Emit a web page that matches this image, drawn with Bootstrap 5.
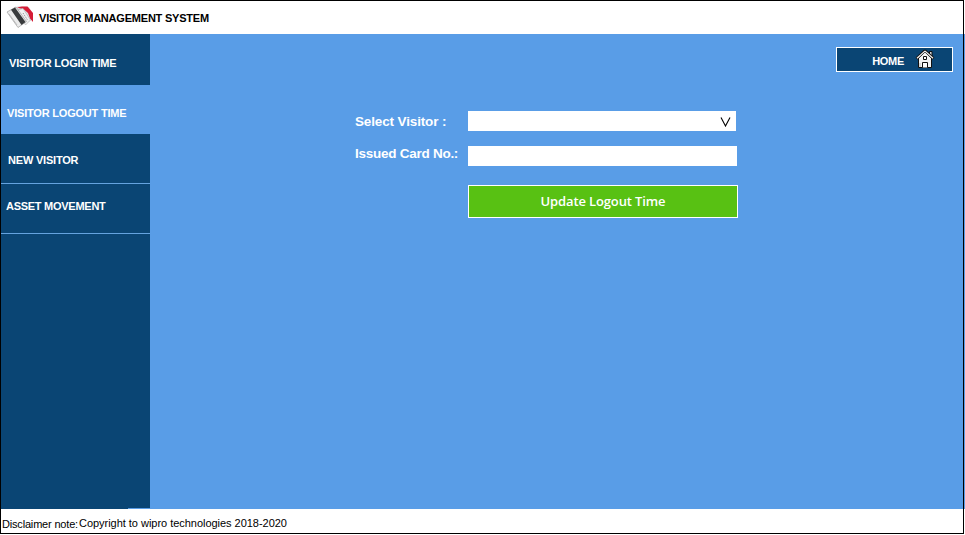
<!DOCTYPE html>
<html lang="en">
<head>
<meta charset="utf-8">
<title>Visitor Management System</title>
<link href="https://cdn.jsdelivr.net/npm/bootstrap@5.3.0/dist/css/bootstrap.min.css" rel="stylesheet">
<style>
:root{--sky:#599de7;--navy:#0a4574}
body{font-family:"Liberation Sans",Arial,sans-serif;font-size:11px;line-height:14px;background:linear-gradient(#fff 34px,var(--sky) 34px 509px,#fff 509px)}
.app-frame{width:964px;height:534px;border:1px solid #000}
.app-header{height:33px;padding-left:5px;background:#fff}
.app-title{letter-spacing:-.21px;margin:1px 0 0 5px;font-size:11px;line-height:14px}
.card-logo{margin-bottom:2px}
.side-menu{width:149px;background:var(--navy)}
.side-menu .nav-link{color:#fff;font-weight:700;letter-spacing:-.2px;font-size:11px;line-height:14px;padding:0;white-space:nowrap}
.side-menu .item-login{height:51px;padding:22px 0 0 8px}
.side-menu .item-logout{height:49px;padding:21px 0 0 6px;background:var(--sky)}
.side-menu .item-new{height:50px;padding:19px 0 0 7px;border-bottom:1px solid #65a3df}
.side-menu .item-asset{height:50px;padding:15px 0 0 5px;border-bottom:1px solid #65a3df;letter-spacing:-.27px}
.menu-edge{width:22px;height:1px;background:var(--sky)}
.work-area{background:var(--sky)}
.home-btn{width:117px;height:25px;margin:13px 10px 0 0;padding:0 17px 0 0;border:1px solid #fff;border-radius:0;background:var(--navy);color:#fff;font-size:11px;font-weight:700;line-height:14px;letter-spacing:-.3px;gap:12px}
.home-btn:hover{background:var(--navy);color:#fff}
.home-text{padding-top:3px;margin-right:-1px}
.home-icon{margin-bottom:2px}
.visitor-form{width:383px;margin:39px 0 0 205px}
.form-line{height:20px}
.form-line label{width:113px;color:#fff;font-weight:700;font-size:13.5px;line-height:16px;white-space:nowrap;letter-spacing:-.14px}
.label-visitor{padding-top:2px}
.form-line .label-card{padding-bottom:4px;letter-spacing:-.26px}
.card-line{margin-top:15px}
.field-box{height:20px;border:0;border-radius:0;background:#fff;padding:0 5px 0 0}
.w-select{width:268px;padding-top:2px}.w-card{width:269px}
.update-btn{width:270px;height:33px;margin:19px 0 0 113px;padding:0;border:1px solid #fff;border-radius:0;background:#58c113;color:#fff;font:600 13px/29px "Open Sans",sans-serif;letter-spacing:-.13px}
.update-btn:hover{background:#58c113;color:#fff}
.app-footer{height:24px;padding:5px 0 0 1px;background:#fff;color:#000;white-space:nowrap}
.note-label{width:77px;padding-top:1px;letter-spacing:-.18px}
.note-copy{padding:0 0 1px 0;letter-spacing:-.03px}
</style>
<script src="https://cdn.jsdelivr.net/npm/bootstrap@5.3.0/dist/js/bootstrap.bundle.min.js"></script>
</head>
<body>
<div class="app-frame d-flex flex-column">
  <header class="app-header d-flex align-items-center">
    <svg class="card-logo" width="28" height="24" viewBox="0 0 28 24" aria-hidden="true">
      <path d="M9 2l5-1 9 1 3 6v7l-6 3z" fill="#dfe0e1"/>
      <path d="M11 2.500l5-1h5.500L27 8v9l-3-3.500-2-5.500-4-3.500z" fill="#d51c36"/>
      <path d="M11 5l6-1.500L24.500 15l-5 5z" fill="#f1f1f1" stroke="#b5b5b5" stroke-width=".7"/>
      <path d="M17 8l4.500 7M15 11l3.500 6" stroke="#999" stroke-width="1" stroke-dasharray="1.5 1"/>
      <path d="M1 7l9-5 10.500 14.500L12 22.500z" fill="#ebebeb" stroke="#a8a8a8" stroke-width=".8"/>
      <path d="M5 4.800l4-2.200L19.500 17l-4 3z" fill="#393b3c"/>
      <path d="M3 9l8 11" stroke="#bbb" stroke-width="1"/>
    </svg>
    <h1 class="app-title fw-bold text-black">VISITOR MANAGEMENT SYSTEM</h1>
  </header>
  <div class="d-flex flex-grow-1">
    <nav class="side-menu nav flex-column flex-nowrap flex-shrink-0">
      <a class="nav-link item-login" href="#">VISITOR LOGIN TIME</a>
      <a class="nav-link item-logout active" href="#">VISITOR LOGOUT TIME</a>
      <a class="nav-link item-new" href="#">NEW VISITOR</a>
      <a class="nav-link item-asset" href="#">ASSET MOVEMENT</a>
      <span class="menu-edge mt-auto align-self-end"></span>
    </nav>
    <main class="work-area flex-grow-1 d-flex flex-column">
      <a class="btn home-btn d-flex align-items-center justify-content-end align-self-end" href="#"><span class="home-text">HOME</span>
        <svg class="home-icon" width="20" height="20" viewBox="0 0 20 20" aria-hidden="true">
          <path d="M14.500 2.500H17v6l-2.500-2.500z" fill="#ddd" stroke="#111"/>
          <path d="M3.500 9L10 3l6.500 6v9.500h-13z" fill="#f4f4f4" stroke="#111"/>
          <path d="M1.500 9.500L9.500 2h1l8 7.500" fill="none" stroke="#111" stroke-width="2.600"/>
          <path d="M2 9.300L9.700 2.300h.6L18 9.300" fill="none" stroke="#eee" stroke-width="1.300"/>
          <path d="M8.500 7.500h3v3h-3zM7.500 18.500V13.500h5v5" fill="#fff" stroke="#111"/>
          <path d="M5 18V14" stroke="#bbb"/>
        </svg>
      </a>
      <form class="visitor-form">
        <div class="form-line d-flex align-items-center">
          <label class="label-visitor" for="visitor">Select Visitor :</label>
          <button type="button" id="visitor" class="field-box w-select d-flex align-items-center justify-content-end" aria-label="Select visitor">
            <svg width="11" height="10" viewBox="0 0 11 10"><path d="M1 .5L5.500 9 10 .5" fill="none" stroke="#000" stroke-width="1.100"/></svg>
          </button>
        </div>
        <div class="form-line card-line d-flex align-items-center">
          <label class="label-card" for="card">Issued Card No.:</label>
          <input id="card" class="field-box w-card" type="text">
        </div>
        <button type="button" class="btn update-btn">Update Logout Time</button>
      </form>
    </main>
  </div>
  <footer class="app-footer d-flex align-items-center">
    <span class="note-label">Disclaimer note:</span><span class="note-copy">Copyright to wipro technologies 2018-2020</span>
  </footer>
</div>
</body>
</html>
